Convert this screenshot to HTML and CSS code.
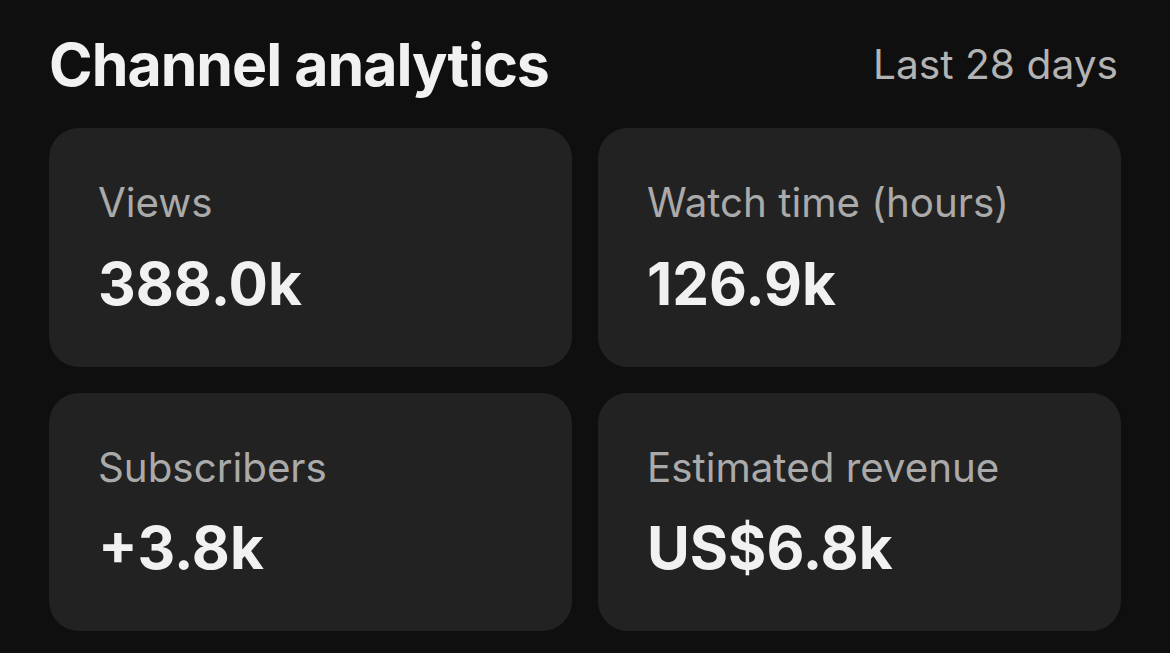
FILE: index.html
```html
<!DOCTYPE html>
<html lang="en">
<head>
<meta charset="UTF-8" />
<meta name="viewport" content="width=device-width, initial-scale=1" />
<title>Channel analytics</title>
<link rel="stylesheet" href="styles.css">
</head>
<body>

<div class="analytics">
  <div class="analytics-header">
    <h1 class="title">Channel analytics</h1>
    <div class="period">Last 28 days</div>
  </div>

  <div class="cards">
    <div class="card">
      <div class="card-label">Views</div>
      <div class="card-value">388.0k</div>
    </div>
    <div class="card">
      <div class="card-label">Watch time (hours)</div>
      <div class="card-value">126.9k</div>
    </div>
    <div class="card">
      <div class="card-label">Subscribers</div>
      <div class="card-value">+3.8k</div>
    </div>
    <div class="card">
      <div class="card-label">Estimated revenue</div>
      <div class="card-value">US$6.8k</div>
    </div>
  </div>
</div>

</body>
</html>
```

FILE: styles.css
```css
  body, html {
    margin: 0; padding: 0; height: 100%;
    background: #0f0f0f;
    font-family: Inter, "Noto Sans", sans-serif;
    color: #f1f1f1;
    overflow: hidden;
  }

  .analytics {
    padding: 29px 49px 0 49px;
  }

  .analytics-header {
    display: flex;
    justify-content: space-between;
    align-items: center;
    margin-bottom: 28px;
  }

  .title {
    margin: 0;
    font-size: 59px;
    font-weight: 700;
    line-height: 1.21;
    letter-spacing: -1px;
  }

  .period {
    font-size: 40.7px;
    line-height: 1.21;
    color: #b3b3b3;
    padding-right: 3px;
  }

  .cards {
    display: grid;
    grid-template-columns: 1fr 1fr;
    gap: 26px;
  }

  .card {
    background: #222222;
    border-radius: 30px;
    padding: 50px 49px 48px 49px;
  }

  .card-label {
    font-size: 40.3px;
    line-height: 1.22;
    color: #aaaaaa;
    margin-bottom: 20px;
  }

  .card-value {
    font-size: 58.5px;
    font-weight: 700;
    line-height: 1.22;
  }
```
